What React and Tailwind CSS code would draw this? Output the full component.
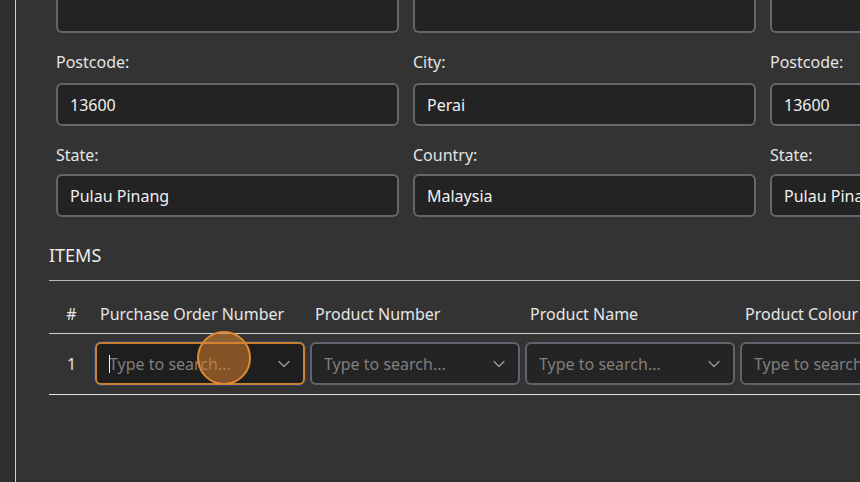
import { ChevronDown } from "lucide-react";

const FONT = { fontFamily: '"Noto Sans", "Open Sans", sans-serif' };

const ADDRESS = [
  [
    { label: "Postcode:", value: "13600" },
    { label: "State:", value: "Pulau Pinang" },
  ],
  [
    { label: "City:", value: "Perai" },
    { label: "Country:", value: "Malaysia" },
  ],
  [
    { label: "Postcode:", value: "13600" },
    { label: "State:", value: "Pulau Pinang" },
  ],
];

const COLUMNS = ["Purchase Order Number", "Product Number", "Product Name", "Product Colour"];

function Field({ label, value, first }) {
  return (
    <div>
      <div className="mt-[17px] h-[24px] leading-[24px] text-[16px] text-[#e4e4e4] whitespace-nowrap">
        {label}
      </div>
      <div
        className={`${first ? "mt-[9px]" : "mt-[7px]"} h-[43px] rounded-[6px] border-2 border-[#62666d] bg-[#232323] px-3 flex items-center text-[16px] text-[#f0f0f0] whitespace-nowrap overflow-hidden`}
      >
        {value}
      </div>
    </div>
  );
}

function SearchSelect({ focused }) {
  return (
    <div
      className={`relative h-[43px] w-[210px] rounded-[6px] border-2 flex items-center pl-3 pr-[9px] ${
        focused ? "border-[#c8822f] bg-[#1e1e1e] ring-1 ring-[#34436a]" : "border-[#5f636b] bg-[#242424]"
      }`}
    >
      {focused && <span className="absolute left-[12px] top-[11px] h-[18px] w-px bg-[#f2f2f2]" />}
      <span className="flex-1 text-[16px] text-[#7f7f7f] whitespace-nowrap overflow-hidden">Type to search...</span>
      <ChevronDown size={20} strokeWidth={1.6} className="text-[#9a9a9a] shrink-0" />
    </div>
  );
}

export default function App() {
  return (
    <div className="relative w-[860px] h-[482px] overflow-hidden flex bg-[#333333]" style={FONT}>
      <div className="w-[16px] shrink-0 bg-[#2f2f2f] border-r border-[#d2d2d2]" />

      <div className="flex-1 pl-[33px] min-w-0">
        {/* address fields */}
        <div className="ml-[7px] grid grid-cols-[343px_343px_343px] gap-x-[14px]">
          {ADDRESS.map((col, i) => (
            <div key={i}>
              <div className="h-[33px] rounded-b-[6px] border-x-2 border-b-2 border-[#62666d] bg-[#232323]" />
              {col.map((f, j) => (
                <Field key={j} label={f.label} value={f.value} first={j === 0} />
              ))}
            </div>
          ))}
        </div>

        {/* items */}
        <div className="mt-[26px] h-[24px] leading-[24px] text-[18px] text-[#ececec]">ITEMS</div>
        <div className="mt-[13px] w-[1200px] border-t border-[#b9b9b9]">
          <div className="flex h-[52px] pt-[21px] text-[16px] leading-[24px] text-[#e6e6e6] whitespace-nowrap">
            <div className="w-[45px] text-center">#</div>
            {COLUMNS.map((c) => (
              <div key={c} className="w-[215px] pl-[6px]">
                {c}
              </div>
            ))}
          </div>
          <div className="border-t border-[#cdcdcd]" />
          <div className="flex items-center pt-[8px] pb-[9px]">
            <div className="w-[45px] text-center text-[16px] text-[#e6e6e6]">1</div>
            {COLUMNS.map((c, i) => (
              <div key={c} className="w-[215px] pl-[1px]">
                <SearchSelect focused={i === 0} />
              </div>
            ))}
          </div>
          <div className="border-t border-[#e4e4e4]" />
        </div>
      </div>

      {/* click indicator */}
      <div className="absolute left-[197px] top-[331px] w-[54px] h-[54px] rounded-full border-2 border-[#e08a35] bg-[#d9822e]/55" />
    </div>
  );
}
